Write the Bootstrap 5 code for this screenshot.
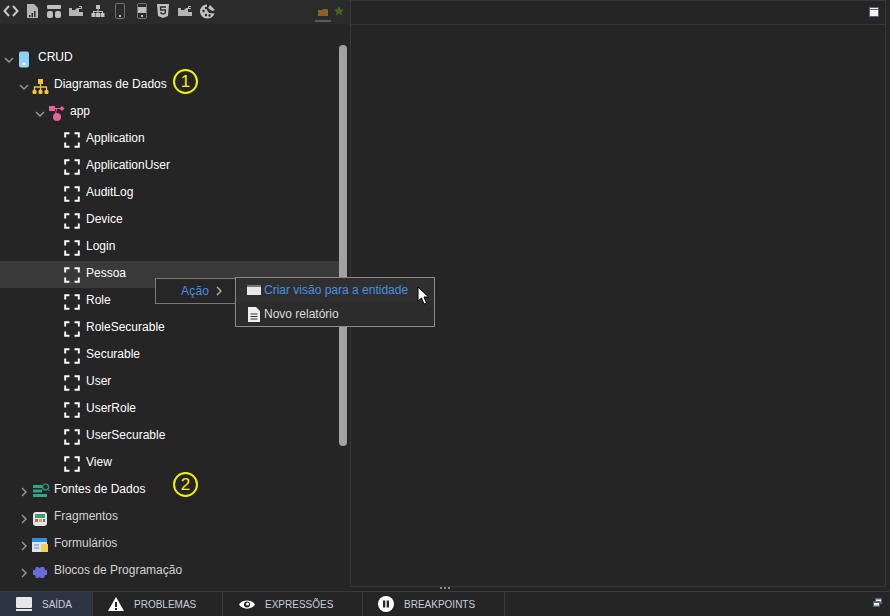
<!DOCTYPE html>
<html lang="pt">
<head>
<meta charset="utf-8">
<title>CRUD</title>
<link href="https://cdn.jsdelivr.net/npm/bootstrap@5.3.0/dist/css/bootstrap.min.css" rel="stylesheet">
<style>
html,body{height:616px;overflow:hidden}
body{background:#252525;color:#fff;font-family:"Liberation Sans",Arial,sans-serif;font-size:12px;position:relative}
.shell{height:591px}
.side{width:350px;flex:none;position:relative}
.tools{height:24px;background:#2b2b2b;padding-left:0;padding-bottom:2px}
.tools svg{display:block;flex:none}
.tool{width:21.8px;height:22px}
.tabmark{position:absolute;left:315px;top:5px;width:16px;height:17px;border-bottom:2px solid #5b5b5b}
.treebox{padding-top:21px}
.trow{height:27px;gap:0;white-space:nowrap;position:relative}
.lv0{padding-left:3px}.lv1{padding-left:18px}.lv2{padding-left:34px}.lv3{padding-left:62px}
.chev{width:12px;height:12px;flex:none;margin-top:3px}
.nodeic{width:20px;height:20px;flex:none;margin-left:1px;margin-right:3px}
.lv3 .nodeic{margin-left:0;margin-right:4px}
.lv0 .nodeic{margin-left:1px;margin-right:2px}
.tlabel{font-size:12px;margin-top:-3px}
.dim{color:#d2d2d2}
.sel{background:#3a3a3a;margin-right:10px}
.thumb{position:absolute;left:339px;top:45px;width:8px;height:401px;background:#a2a2a2;border-radius:4px}
.work{width:536px;height:587px;border:1px solid #383838;flex:none}
.workhead{height:24px;border-bottom:1px solid #383838;padding-right:10px}
.grip{position:absolute;left:440px;top:587px;width:10px;height:3px;display:flex;gap:2px}
.grip i{width:2px;height:2px;background:#8a8a8a}
.bottombar{height:25px;border-top:1px solid #3a3a3a;background:#252525}
.btab{height:24px;border-right:1px solid #3a3a3a;font-size:10px;color:#c6cfdd;white-space:nowrap;padding-left:15px;gap:10px}
.t1{width:93px;background:#2d3442;padding-left:16px}.t2{width:130px}.t3{width:140px;padding-left:16px}.t4{width:142px}
.circ{position:absolute;width:25px;height:25px;border:2px solid #f4f400;border-radius:50%;color:#f4f400;font-size:17px;line-height:21px;text-align:center}
.c1{left:173px;top:69px}.c2{left:173px;top:472px}
.act{position:absolute;left:155px;top:278px;width:81px;height:26px;background:#262626;border:1px solid #7a7a7a;border-right:0;color:#4a8fe0;padding-left:25px;font-size:12px;letter-spacing:.2px}
.menuarrow{margin-left:6px}
.pop{position:absolute;left:235px;top:277px;width:200px;height:50px;background:#2c2c2c;border:1px solid #8a8a8a;font-size:12px}
.pitem{height:24px;padding-left:11px;gap:3px}
.pitem.on{background:#2f2f2f;color:#4a8fe0}
.pitem.off{color:#dcdcdc}
.cursor{position:absolute;left:417px;top:286px}
.winbtn{position:absolute;left:869px;top:7px}
.winbtn2{position:absolute;left:873px;top:598px}
</style>
</head>
<body>
<div class="d-flex shell">
  <div class="side">
    <div class="tools d-flex align-items-center">
      <div class="tool d-flex align-items-center justify-content-center"><svg width="16" height="12" viewBox="0 0 16 12"><path d="M6 1 1.500 6 6 11M10 1l4.500 5L10 11" fill="none" stroke="#c8c8c8" stroke-width="2"/></svg></div>
      <div class="tool d-flex align-items-center justify-content-center"><svg width="11" height="14" viewBox="0 0 11 14"><path d="M0 0h7l4 4v10H0z" fill="#b5b5b5"/><path d="M2 11h1.500v2H2zM4.500 9H6v4H4.500zM7 7h1.500v6H7z" fill="#2b2b2b"/></svg></div>
      <div class="tool d-flex align-items-center justify-content-center"><svg width="14" height="13" viewBox="0 0 14 13"><rect width="14" height="4" rx="1" fill="#c0c0c0"/><rect y="6" width="6" height="7" rx="2" fill="#c0c0c0"/><rect x="8" y="6" width="6" height="7" rx="2" fill="#c0c0c0"/></svg></div>
      <div class="tool d-flex align-items-center justify-content-center"><svg width="14" height="12" viewBox="0 0 14 12"><path d="M0 3h3v2h3l2-2h2v4h4v4H0z" fill="#b5b5b5"/><path d="M10 1h3v1h-3zM12 2h1v2h-1zM10 3h3v1h-3z" fill="#b5b5b5"/></svg></div>
      <div class="tool d-flex align-items-center justify-content-center"><svg width="14" height="12" viewBox="0 0 14 12"><path d="M5 0h4v4H7.500v2H12v2h1.500v4h-4V8H11V7H7.500v1H9v4H5V8h1.500V7H3v1h1.500v4h-4V8H2V6h4.500V4H5z" fill="#c0c0c0"/></svg></div>
      <div class="tool d-flex align-items-center justify-content-center"><svg width="10" height="16" viewBox="0 0 10 16"><rect x=".5" y=".5" width="9" height="15" rx="1.500" fill="none" stroke="#6f6f6f"/><rect x="4" y="12" width="2" height="2" fill="#c0c0c0"/></svg></div>
      <div class="tool d-flex align-items-center justify-content-center"><svg width="10" height="16" viewBox="0 0 10 16"><rect x=".5" y=".5" width="9" height="15" rx="1.500" fill="#2b2b2b" stroke="#777"/><rect x="1" y="4" width="8" height="6" fill="#c0c0c0"/><rect x="4" y="12" width="2" height="2" fill="#c0c0c0"/></svg></div>
      <div class="tool d-flex align-items-center justify-content-center"><svg width="12" height="14" viewBox="0 0 12 14"><path d="M0 0h12l-1 12-5 2-5-2z" fill="#c0c0c0"/><path d="M9 3H3.500l.2 3H8.500l-.2 3L6 10l-2-.7V8" fill="none" stroke="#2b2b2b" stroke-width="1.300"/></svg></div>
      <div class="tool d-flex align-items-center justify-content-center"><svg width="14" height="12" viewBox="0 0 14 12"><path d="M0 3h3v2h3l2-2h2v4h4v4H0z" fill="#b5b5b5"/><path d="M10 1h3v1h-2v1h2v1h-3z" fill="#b5b5b5"/></svg></div>
      <div class="tool d-flex align-items-center justify-content-center"><svg width="15" height="15" viewBox="0 0 15 15"><path d="M7 0.500A7 7 0 1 0 7 14.500 7 7 0 0 0 14.500 9.500L9 9 7 6z" fill="#c0c0c0"/><circle cx="3.500" cy="7" r="1.200" fill="#2b2b2b"/><circle cx="6" cy="4" r="1.200" fill="#2b2b2b"/><circle cx="6" cy="11" r="1.200" fill="#2b2b2b"/><circle cx="9.500" cy="11.500" r="1.200" fill="#2b2b2b"/><path d="M10 1l5 5-3 1-4-3z" fill="#c0c0c0"/></svg></div>
      <div class="tabmark d-flex justify-content-center align-items-start"><svg width="10" height="7" viewBox="0 0 10 7" class="mt-1"><path d="M0 1h4l1-1h5v7H0z" fill="#8a6225"/></svg></div>
      <svg width="10" height="10" viewBox="0 0 10 10" style="position:absolute;left:334px;top:6px"><path d="M5 0l1.500 3.300 3.500.4-2.600 2.300.8 3.500L5 7.700 1.800 9.500l.8-3.500L0 3.700l3.500-.4z" fill="#4c6320"/></svg>
    </div>
    <div class="treebox">
      <div class="trow lv0 d-flex align-items-center"><svg class="chev" viewBox="0 0 12 12"><path d="M2 4l4 4 4-4" fill="none" stroke="#9a9a9a" stroke-width="1.400"/></svg><svg class="nodeic" viewBox="0 0 20 20"><rect x="3" y="2.500" width="10" height="16" rx="2" fill="#8fd0f8"/><circle cx="8" cy="15" r="1.500" fill="#fff"/></svg><span class="tlabel">CRUD</span></div>
      <div class="trow lv1 d-flex align-items-center"><svg class="chev" viewBox="0 0 12 12"><path d="M2 4l4 4 4-4" fill="none" stroke="#9a9a9a" stroke-width="1.400"/></svg><svg class="nodeic" viewBox="0 0 20 20"><rect x="7" y="3" width="5" height="5" fill="#f2c53a"/><path d="M9.500 8v3M3.500 15v-4h12v4M9.500 11v4" fill="none" stroke="#f2c53a" stroke-width="1.300"/><rect x="1.500" y="14" width="4" height="4" rx="1" fill="#f2c53a"/><rect x="7.500" y="14" width="4" height="4" rx="1" fill="#f2c53a"/><rect x="13.500" y="14" width="4" height="4" rx="1" fill="#f2c53a"/></svg><span class="tlabel">Diagramas de Dados</span></div>
      <div class="trow lv2 d-flex align-items-center"><svg class="chev" viewBox="0 0 12 12"><path d="M2 4l4 4 4-4" fill="none" stroke="#9a9a9a" stroke-width="1.400"/></svg><svg class="nodeic" viewBox="0 0 20 20"><rect x="2" y="3" width="6" height="5" fill="#e8609c"/><path d="M8 5.500h6M9.500 6l-1 5" stroke="#e8609c" fill="none"/><path d="M15 3l2.500 2.500L15 8l-2.500-2.500z" fill="#e8609c"/><circle cx="10" cy="14" r="4" fill="#e8609c"/></svg><span class="tlabel">app</span></div>
      <div class="trow lv3 d-flex align-items-center"><svg class="nodeic" viewBox="0 0 20 20"><path d="M2 7V2h5M13 2h5v5M18 13v5h-5M7 18H2v-5" transform="translate(1.500 1.500) scale(.85)" fill="none" stroke="#fff" stroke-width="2.300"/></svg><span class="tlabel">Application</span></div>
      <div class="trow lv3 d-flex align-items-center"><svg class="nodeic" viewBox="0 0 20 20"><path d="M2 7V2h5M13 2h5v5M18 13v5h-5M7 18H2v-5" transform="translate(1.500 1.500) scale(.85)" fill="none" stroke="#fff" stroke-width="2.300"/></svg><span class="tlabel">ApplicationUser</span></div>
      <div class="trow lv3 d-flex align-items-center"><svg class="nodeic" viewBox="0 0 20 20"><path d="M2 7V2h5M13 2h5v5M18 13v5h-5M7 18H2v-5" transform="translate(1.500 1.500) scale(.85)" fill="none" stroke="#fff" stroke-width="2.300"/></svg><span class="tlabel">AuditLog</span></div>
      <div class="trow lv3 d-flex align-items-center"><svg class="nodeic" viewBox="0 0 20 20"><path d="M2 7V2h5M13 2h5v5M18 13v5h-5M7 18H2v-5" transform="translate(1.500 1.500) scale(.85)" fill="none" stroke="#fff" stroke-width="2.300"/></svg><span class="tlabel">Device</span></div>
      <div class="trow lv3 d-flex align-items-center"><svg class="nodeic" viewBox="0 0 20 20"><path d="M2 7V2h5M13 2h5v5M18 13v5h-5M7 18H2v-5" transform="translate(1.500 1.500) scale(.85)" fill="none" stroke="#fff" stroke-width="2.300"/></svg><span class="tlabel">Login</span></div>
      <div class="trow lv3 sel d-flex align-items-center"><svg class="nodeic" viewBox="0 0 20 20"><path d="M2 7V2h5M13 2h5v5M18 13v5h-5M7 18H2v-5" transform="translate(1.500 1.500) scale(.85)" fill="none" stroke="#fff" stroke-width="2.300"/></svg><span class="tlabel">Pessoa</span></div>
      <div class="trow lv3 d-flex align-items-center"><svg class="nodeic" viewBox="0 0 20 20"><path d="M2 7V2h5M13 2h5v5M18 13v5h-5M7 18H2v-5" transform="translate(1.500 1.500) scale(.85)" fill="none" stroke="#fff" stroke-width="2.300"/></svg><span class="tlabel">Role</span></div>
      <div class="trow lv3 d-flex align-items-center"><svg class="nodeic" viewBox="0 0 20 20"><path d="M2 7V2h5M13 2h5v5M18 13v5h-5M7 18H2v-5" transform="translate(1.500 1.500) scale(.85)" fill="none" stroke="#fff" stroke-width="2.300"/></svg><span class="tlabel">RoleSecurable</span></div>
      <div class="trow lv3 d-flex align-items-center"><svg class="nodeic" viewBox="0 0 20 20"><path d="M2 7V2h5M13 2h5v5M18 13v5h-5M7 18H2v-5" transform="translate(1.500 1.500) scale(.85)" fill="none" stroke="#fff" stroke-width="2.300"/></svg><span class="tlabel">Securable</span></div>
      <div class="trow lv3 d-flex align-items-center"><svg class="nodeic" viewBox="0 0 20 20"><path d="M2 7V2h5M13 2h5v5M18 13v5h-5M7 18H2v-5" transform="translate(1.500 1.500) scale(.85)" fill="none" stroke="#fff" stroke-width="2.300"/></svg><span class="tlabel">User</span></div>
      <div class="trow lv3 d-flex align-items-center"><svg class="nodeic" viewBox="0 0 20 20"><path d="M2 7V2h5M13 2h5v5M18 13v5h-5M7 18H2v-5" transform="translate(1.500 1.500) scale(.85)" fill="none" stroke="#fff" stroke-width="2.300"/></svg><span class="tlabel">UserRole</span></div>
      <div class="trow lv3 d-flex align-items-center"><svg class="nodeic" viewBox="0 0 20 20"><path d="M2 7V2h5M13 2h5v5M18 13v5h-5M7 18H2v-5" transform="translate(1.500 1.500) scale(.85)" fill="none" stroke="#fff" stroke-width="2.300"/></svg><span class="tlabel">UserSecurable</span></div>
      <div class="trow lv3 d-flex align-items-center"><svg class="nodeic" viewBox="0 0 20 20"><path d="M2 7V2h5M13 2h5v5M18 13v5h-5M7 18H2v-5" transform="translate(1.500 1.500) scale(.85)" fill="none" stroke="#fff" stroke-width="2.300"/></svg><span class="tlabel">View</span></div>
      <div class="trow lv1 d-flex align-items-center"><svg class="chev" viewBox="0 0 12 12"><path d="M4 2l4 4-4 4" fill="none" stroke="#9a9a9a" stroke-width="1.400"/></svg><svg class="nodeic" viewBox="0 0 20 20"><path d="M2 4h9v3H2zM2 8.500h9v3H2zM2 13h14v3H2z" fill="#2ea58a"/><circle cx="14.500" cy="6" r="3" fill="none" stroke="#2ea58a" stroke-width="1.200"/><path d="M16.500 8l2 2" stroke="#2ea58a"/></svg><span class="tlabel">Fontes de Dados</span></div>
      <div class="trow lv1 d-flex align-items-center"><svg class="chev" viewBox="0 0 12 12"><path d="M4 2l4 4-4 4" fill="none" stroke="#9a9a9a" stroke-width="1.400"/></svg><svg class="nodeic" viewBox="0 0 20 20"><rect x="2" y="4" width="14" height="14" rx="3" fill="#e6e6e6"/><rect x="4" y="6" width="10" height="4" fill="#3f9d7e"/><rect x="4" y="11" width="3" height="3" fill="#d95a5a"/><rect x="8" y="11" width="3" height="3" fill="#d9a64a"/><rect x="12" y="11" width="2" height="3" fill="#5a6ad9"/></svg><span class="tlabel dim">Fragmentos</span></div>
      <div class="trow lv1 d-flex align-items-center"><svg class="chev" viewBox="0 0 12 12"><path d="M4 2l4 4-4 4" fill="none" stroke="#9a9a9a" stroke-width="1.400"/></svg><svg class="nodeic" viewBox="0 0 20 20"><rect x="1" y="3" width="15" height="14" fill="#d8e6f5"/><rect x="1" y="3" width="15" height="4" fill="#2e8fe0"/><rect x="10" y="9" width="7" height="8" fill="#f5ce55"/><path d="M3 10h5M3 13h5" stroke="#6a8aa8"/></svg><span class="tlabel dim">Formulários</span></div>
      <div class="trow lv1 d-flex align-items-center"><svg class="chev" viewBox="0 0 12 12"><path d="M4 2l4 4-4 4" fill="none" stroke="#9a9a9a" stroke-width="1.400"/></svg><svg class="nodeic" viewBox="0 0 20 20"><path d="M5 5h2l1.500 1L10 5h3l1 3h2v5h-2l-1 3h-3l-1.500-1L7 16H5l-1-3H2V8h2z" fill="#6a6adf"/></svg><span class="tlabel dim">Blocos de Programação</span></div>
    </div>
    <div class="thumb"></div>
  </div>
  <div class="work">
    <div class="workhead"></div>
  </div>
</div>
<div class="bottombar d-flex">
  <div class="btab t1 d-flex align-items-center"><svg width="16" height="14" viewBox="0 0 16 14"><rect x="0" y="0" width="16" height="11" rx="1" fill="#e8e8e8"/><rect y="12" width="16" height="2" fill="#e8e8e8"/></svg><span>SAÍDA</span></div>
  <div class="btab t2 d-flex align-items-center"><svg width="16" height="14" viewBox="0 0 16 14"><path d="M8 0l8 14H0z" fill="#fff"/><rect x="7" y="5" width="2" height="5" fill="#252525"/><rect x="7" y="11" width="2" height="2" fill="#252525"/></svg><span>PROBLEMAS</span></div>
  <div class="btab t3 d-flex align-items-center"><svg width="16" height="11" viewBox="0 0 16 11"><path d="M0 5.500C3 0 13 0 16 5.500 13 11 3 11 0 5.500z" fill="#fff"/><circle cx="8" cy="5.500" r="3" fill="#252525"/><circle cx="8.500" cy="5" r="1.500" fill="#fff"/></svg><span>EXPRESSÕES</span></div>
  <div class="btab t4 d-flex align-items-center"><svg width="16" height="16" viewBox="0 0 16 16"><circle cx="8" cy="8" r="8" fill="#fff"/><rect x="5" y="4.500" width="2.300" height="7" fill="#252525"/><rect x="8.700" y="4.500" width="2.300" height="7" fill="#252525"/></svg><span>BREAKPOINTS</span></div>
</div>
<div class="grip"><i></i><i></i><i></i></div>
<span class="circ c1">1</span>
<span class="circ c2">2</span>
<div class="act d-flex align-items-center"><span>Ação</span><svg class="menuarrow" width="8" height="10" viewBox="0 0 8 10"><path d="M2 1l4 4-4 4" fill="none" stroke="#b8b8b8" stroke-width="1.300"/></svg></div>
<div class="pop">
  <div class="pitem on d-flex align-items-center"><svg width="14" height="10" viewBox="0 0 14 10"><rect width="14" height="10" fill="#e8e8e8"/><rect y="0" width="14" height="2" fill="#777"/></svg><span>Criar visão para a entidade</span></div>
  <div class="pitem off d-flex align-items-center"><svg width="14" height="15" viewBox="0 0 14 15"><path d="M1 0h8l4 4v11H1z" fill="#eee"/><path d="M3.500 7h7M3.500 9.500h7M3.500 12h7" stroke="#333"/></svg><span>Novo relatório</span></div>
</div>
<svg class="cursor" width="13" height="19" viewBox="0 0 13 19"><path d="M1 1v14l3.500-3 2.500 6 2.500-1-2.500-6h4.500z" fill="#fff" stroke="#000"/></svg>
<svg class="winbtn" width="10" height="10" viewBox="0 0 10 10"><rect width="10" height="10" fill="#5a6278"/><rect x="1" y="3" width="8" height="6" fill="#f2f2f2"/><rect x="1" y="1" width="8" height="1" fill="#f2f2f2"/></svg>
<svg class="winbtn2" width="9" height="9" viewBox="0 0 9 9"><rect x="2" y="0" width="7" height="6" fill="#5a6278"/><rect x="3" y="1.500" width="5" height="2" fill="#f2f2f2"/><rect x="0" y="3" width="7" height="6" fill="#5a6278"/><rect x="1" y="5" width="5" height="2.500" fill="#f2f2f2"/></svg>
</body>
</html>
